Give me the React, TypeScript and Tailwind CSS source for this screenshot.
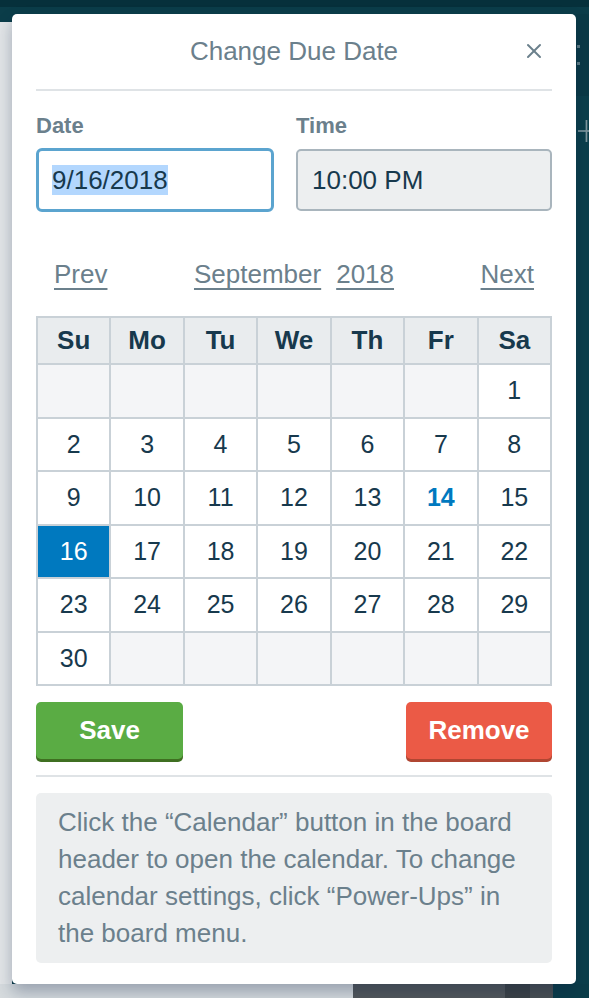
import { X } from 'lucide-react'

const weekDays = ['Su', 'Mo', 'Tu', 'We', 'Th', 'Fr', 'Sa']

// September 2018 starts on a Saturday
const days: (number | null)[] = [
  null, null, null, null, null, null, 1,
  2, 3, 4, 5, 6, 7, 8,
  9, 10, 11, 12, 13, 14, 15,
  16, 17, 18, 19, 20, 21, 22,
  23, 24, 25, 26, 27, 28, 29,
  30, null, null, null, null, null, null,
]

const TODAY = 14
const SELECTED = 16

const font = { fontFamily: '"Liberation Sans", Arial, sans-serif' }

function DayCell({ day }: { day: number | null }) {
  if (day === null) return <div className="h-[51.5px] bg-[#f4f5f7]" />
  if (day === SELECTED) {
    return (
      <div className="h-[51.5px] bg-[#0079bf] flex items-center justify-center text-[25px] text-white">
        {day}
      </div>
    )
  }
  return (
    <div
      className={`h-[51.5px] bg-white flex items-center justify-center text-[25px] ${
        day === TODAY ? 'text-[#0079bf] font-bold' : 'text-[#17394d]'
      }`}
    >
      {day}
    </div>
  )
}

export default function App() {
  return (
    <div className="w-[589px] h-[998px] overflow-hidden bg-[#0b3d49] flex flex-col" style={font}>
      {/* Top board bar */}
      <div className="h-[14px] shrink-0 flex flex-col">
        <div className="h-[7px] bg-[#06303b]" />
        <div className="flex-1 bg-[#0b3d49]" />
      </div>

      <div className="flex shrink-0">
        {/* Left board strip */}
        <div className="w-[12px] shrink-0 flex flex-col">
          <div className="h-[8px] bg-[#0b3d49]" />
          <div className="flex-1 bg-[#e2e5e7]" />
        </div>

        {/* Popover */}
        <div className="w-[564px] shrink-0 h-[970px] bg-white rounded-[5px] shadow-[0_8px_16px_rgba(9,30,66,0.3)] px-[24px] relative z-10">
          <div className="h-[75px] flex items-center justify-center relative">
            <span className="text-[26px] text-[#6b808c]">Change Due Date</span>
            <X className="absolute right-[6px] top-[25px] w-[24px] h-[24px] text-[#6b808c]" strokeWidth={2} />
          </div>
          <div className="h-[2px] bg-[#dfe3e6]" />

          {/* Date / Time */}
          <div className="flex gap-[22px] mt-[22px]">
            <div className="w-[238px]">
              <div className="text-[22px] leading-[26px] font-bold text-[#6b808c]">Date</div>
              <div className="mt-[9px] h-[64px] border-[3px] border-[#5ba4cf] rounded-[6px] flex items-center px-[13px]">
                <span className="text-[26px] text-[#17394d] bg-[#b3d7fe] leading-[30px]">9/16/2018</span>
              </div>
            </div>
            <div className="flex-1">
              <div className="text-[22px] leading-[26px] font-bold text-[#6b808c]">Time</div>
              <div className="mt-[10px] h-[62px] border-2 border-[#a9b5bd] bg-[#edeff0] rounded-[5px] flex items-center px-[14px]">
                <span className="text-[26px] text-[#17394d]">10:00 PM</span>
              </div>
            </div>
          </div>

          {/* Month navigation */}
          <div className="mt-[47px] px-[18px] flex items-center justify-between text-[26px] leading-[30px] text-[#6b808c]">
            <span className="underline underline-offset-[5px] decoration-[2px]">Prev</span>
            <div className="flex gap-[15px]">
              <span className="underline underline-offset-[5px] decoration-[2px]">September</span>
              <span className="underline underline-offset-[5px] decoration-[2px]">2018</span>
            </div>
            <span className="underline underline-offset-[5px] decoration-[2px]">Next</span>
          </div>

          {/* Calendar */}
          <div className="mt-[27px] grid grid-cols-7 gap-[2px] p-[2px] bg-[#c9d1d7]">
            {weekDays.map((d) => (
              <div
                key={d}
                className="h-[45px] bg-[#e9ecee] flex items-center justify-center text-[26px] font-bold text-[#17394d]"
              >
                {d}
              </div>
            ))}
            {days.map((d, i) => (
              <DayCell key={i} day={d} />
            ))}
          </div>

          {/* Actions */}
          <div className="mt-[16px] flex justify-between">
            <button className="w-[147px] h-[57px] rounded-[5px] bg-[#5aac44] shadow-[0_3px_0_#3f6f21] text-[26px] font-bold text-white">
              Save
            </button>
            <button className="w-[146px] h-[57px] rounded-[5px] bg-[#eb5a46] shadow-[0_3px_0_#b04632] text-[26px] font-bold text-white">
              Remove
            </button>
          </div>

          <div className="mt-[16px] h-[2px] bg-[#dfe3e6]" />

          <div className="mt-[16px] rounded-[5px] bg-[#edeff0] px-[22px] py-[11px] text-[26px] leading-[37px] text-[#6b808c]">
            Click the “Calendar” button in the board header to open the calendar. To change calendar settings,
            click “Power-Ups” in the board menu.
          </div>
        </div>

        {/* Right board strip */}
        <div className="flex-1 min-w-0 overflow-hidden flex flex-col bg-[#0b3f4b]">
          <div className="h-[82px] bg-[#0a3a46] flex items-center">
            <svg width="8" height="24" viewBox="0 0 8 24" className="ml-[1px]">
              <rect x="0" y="2" width="3" height="3" fill="#5f7f88" />
              <rect x="0" y="19" width="3" height="3" fill="#5f7f88" />
            </svg>
          </div>
          <div className="h-[70px] flex items-center">
            <svg width="13" height="26" viewBox="0 0 13 26" className="ml-[2px]">
              <rect x="0" y="12" width="13" height="2" fill="#7d979e" />
              <rect x="9" y="0" width="2" height="26" fill="#7d979e" />
            </svg>
          </div>
        </div>
      </div>

      {/* Bottom board strip */}
      <div className="flex-1 flex">
        <div className="w-[353px] bg-[#d6dbde]" />
        <div className="w-[152px] bg-[#53585b]" />
        <div className="w-[25px] bg-[#3d4346]" />
        <div className="w-[23px] bg-[#4a5053]" />
        <div className="flex-1 bg-[#0b3d49]" />
      </div>
    </div>
  )
}
